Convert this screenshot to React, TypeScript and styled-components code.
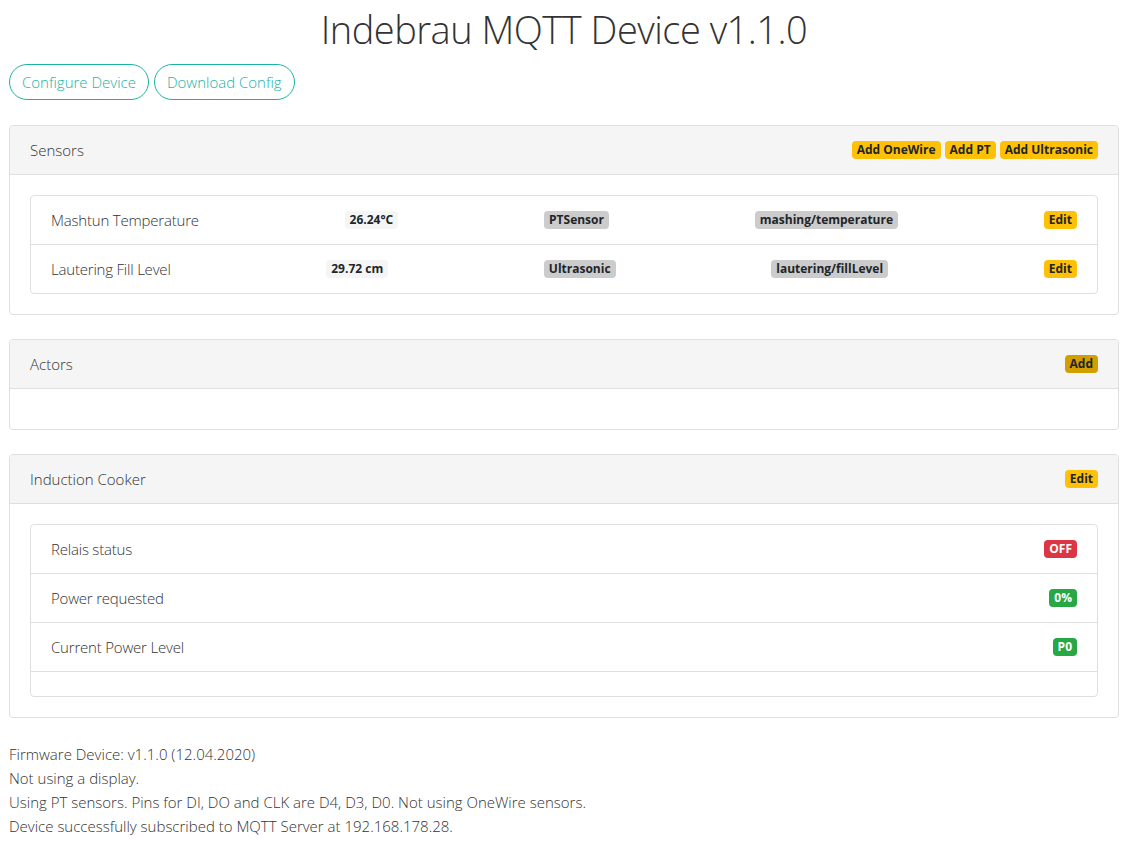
import styled, { createGlobalStyle } from 'styled-components';

type Tone = 'warning' | 'warningDark' | 'light' | 'gray' | 'danger' | 'success';

const tones: Record<Tone, { bg: string; fg: string }> = {
  warning: { bg: '#ffc107', fg: '#212529' },
  warningDark: { bg: '#d39e00', fg: '#212529' },
  light: { bg: '#f5f5f5', fg: '#212529' },
  gray: { bg: '#cccccc', fg: '#212529' },
  danger: { bg: '#dc3545', fg: '#ffffff' },
  success: { bg: '#28a745', fg: '#ffffff' },
};

const sensors = [
  { name: 'Mashtun Temperature', value: '26.24°C', type: 'PTSensor', topic: 'mashing/temperature' },
  { name: 'Lautering Fill Level', value: '29.72 cm', type: 'Ultrasonic', topic: 'lautering/fillLevel' },
];

const cooker: { label: string; value: string; tone: Tone }[] = [
  { label: 'Relais status', value: 'OFF', tone: 'danger' },
  { label: 'Power requested', value: '0%', tone: 'success' },
  { label: 'Current Power Level', value: 'P0', tone: 'success' },
];

const App = () => {
  return (
    <>
      <GlobalStyle />
      <Page>
        <Title>Indebrau MQTT Device v1.1.0</Title>
        <ButtonRow>
          <OutlineButton>Configure Device</OutlineButton>
          <OutlineButton>Download Config</OutlineButton>
        </ButtonRow>

        <Card>
          <CardHeader>
            <span>Sensors</span>
            <BadgeGroup>
              <Badge tone="warning">Add OneWire</Badge>
              <Badge tone="warning">Add PT</Badge>
              <Badge tone="warning">Add Ultrasonic</Badge>
            </BadgeGroup>
          </CardHeader>
          <CardBody>
            <ListGroup>
              {sensors.map((s) => (
                <ListItem key={s.name}>
                  <ItemLabel>{s.name}</ItemLabel>
                  <Badge tone="light">{s.value}</Badge>
                  <Badge tone="gray">{s.type}</Badge>
                  <Badge tone="gray">{s.topic}</Badge>
                  <Badge tone="warning">Edit</Badge>
                </ListItem>
              ))}
            </ListGroup>
          </CardBody>
        </Card>

        <Card>
          <CardHeader>
            <span>Actors</span>
            <Badge tone="warningDark">Add</Badge>
          </CardHeader>
          <CardBody />
        </Card>

        <Card>
          <CardHeader>
            <span>Induction Cooker</span>
            <Badge tone="warning">Edit</Badge>
          </CardHeader>
          <CardBody>
            <ListGroup>
              {cooker.map((c) => (
                <ListItem key={c.label}>
                  <ItemLabel>{c.label}</ItemLabel>
                  <Badge tone={c.tone}>{c.value}</Badge>
                </ListItem>
              ))}
              <ListItem />
            </ListGroup>
          </CardBody>
        </Card>

        <Footer>
          <div>Firmware Device: v1.1.0 (12.04.2020)</div>
          <div>Not using a display.</div>
          <div>Using PT sensors. Pins for DI, DO and CLK are D4, D3, D0. Not using OneWire sensors.</div>
          <div>Device successfully subscribed to MQTT Server at 192.168.178.28.</div>
        </Footer>
      </Page>
    </>
  );
};

const GlobalStyle = createGlobalStyle`
  body {
    margin: 0;
    background: #ffffff;
    color: #333333;
    font-family: "Open Sans", "Noto Sans", sans-serif;
    font-weight: 300;
    font-size: 15px;
    line-height: 24px;
  }
`;

const Page = styled.div`
  padding: 0 14px 16px 9px;
`;

const Title = styled.h1`
  margin: 0 0 8px;
  padding-top: 2px;
  font-size: 38px;
  font-weight: 300;
  letter-spacing: -0.5px;
  line-height: 54px;
  text-align: center;
  color: #333333;
`;

const ButtonRow = styled.div`
  display: flex;
  gap: 5px;
  margin-bottom: 25px;
`;

const OutlineButton = styled.button`
  height: 36px;
  padding: 0 12px;
  border: 1px solid #1ab3a4;
  border-radius: 18px;
  background: #ffffff;
  color: #1ab3a4;
  font-family: inherit;
  font-weight: 300;
  font-size: 15px;
  cursor: pointer;
`;

const Card = styled.div`
  border: 1px solid #dfdfdf;
  border-radius: 4px;
  margin-bottom: 24px;
`;

const CardHeader = styled.div`
  display: flex;
  align-items: center;
  justify-content: space-between;
  padding: 12px 20px;
  background: #f5f5f5;
  border-bottom: 1px solid #dfdfdf;
  border-radius: 3px 3px 0 0;
`;

const BadgeGroup = styled.div`
  display: flex;
  gap: 4px;
`;

const CardBody = styled.div`
  padding: 20px;
`;

const ListGroup = styled.div`
  border: 1px solid #dfdfdf;
  border-radius: 4px;
`;

const ListItem = styled.div`
  display: flex;
  align-items: center;
  justify-content: space-between;
  padding: 12px 20px;
  min-height: 24px;
  box-sizing: border-box;
  border-bottom: 1px solid #dfdfdf;

  &:last-child {
    border-bottom: none;
  }

  &:empty {
    min-height: 0;
  }
`;

const ItemLabel = styled.span`
  letter-spacing: -0.2px;
`;

const Badge = styled.span<{ tone: Tone }>`
  display: inline-block;
  padding: 3px 5px;
  border-radius: 4px;
  font-size: 12px;
  font-weight: 700;
  line-height: 12px;
  white-space: nowrap;
  background: ${(p) => tones[p.tone].bg};
  color: ${(p) => tones[p.tone].fg};
`;

const Footer = styled.div`
  font-size: 15px;
  line-height: 24px;
`;

export default App;
